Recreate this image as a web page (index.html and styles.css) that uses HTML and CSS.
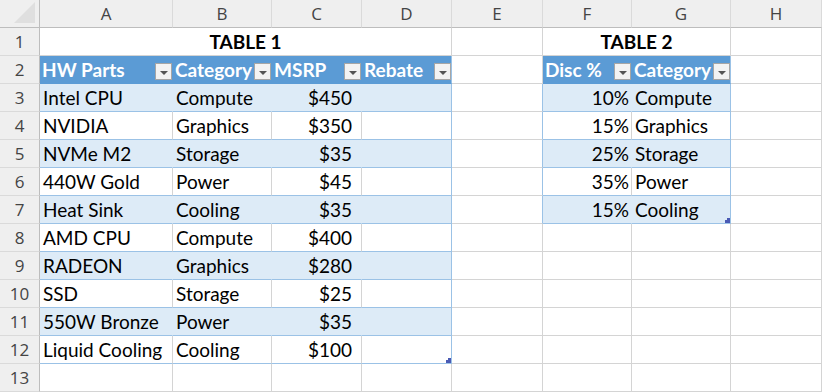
FILE: index.html
```html
<!DOCTYPE html>
<html>
<head>
<meta charset="utf-8">
<link rel="stylesheet" href="styles.css">
</head>
<body>
<div class="sheet">
  <!-- column headings -->
  <div class="corner"><span class="tri"></span></div>
  <div class="ch">A</div><div class="ch">B</div><div class="ch">C</div><div class="ch">D</div>
  <div class="ch">E</div><div class="ch">F</div><div class="ch">G</div><div class="ch">H</div>

  <!-- row 1 -->
  <div class="rh">1</div>
  <div class="c title span4">TABLE 1</div>
  <div class="c"></div>
  <div class="c title span2">TABLE 2</div>
  <div class="c"></div>

  <!-- row 2 -->
  <div class="rh">2</div>
  <div class="c th"><span>HW Parts</span><span class="fb"></span></div>
  <div class="c th"><span>Category</span><span class="fb"></span></div>
  <div class="c th"><span>MSRP</span><span class="fb"></span></div>
  <div class="c th last"><span>Rebate</span><span class="fb"></span></div>
  <div class="c"></div>
  <div class="c th"><span>Disc %</span><span class="fb"></span></div>
  <div class="c th last"><span>Category</span><span class="fb"></span></div>
  <div class="c"></div>

  <!-- row 3 -->
  <div class="rh">3</div>
  <div class="c t b">Intel CPU</div><div class="c t b">Compute</div><div class="c t b num">$450</div><div class="c t b last"></div>
  <div class="c lb"></div>
  <div class="c t b pct">10%</div><div class="c t b last">Compute</div>
  <div class="c"></div>

  <!-- row 4 -->
  <div class="rh">4</div>
  <div class="c t">NVIDIA</div><div class="c t">Graphics</div><div class="c t num">$350</div><div class="c t last"></div>
  <div class="c lb"></div>
  <div class="c t pct">15%</div><div class="c t last">Graphics</div>
  <div class="c"></div>

  <!-- row 5 -->
  <div class="rh">5</div>
  <div class="c t b">NVMe M2</div><div class="c t b">Storage</div><div class="c t b num">$35</div><div class="c t b last"></div>
  <div class="c lb"></div>
  <div class="c t b pct">25%</div><div class="c t b last">Storage</div>
  <div class="c"></div>

  <!-- row 6 -->
  <div class="rh">6</div>
  <div class="c t">440W Gold</div><div class="c t">Power</div><div class="c t num">$45</div><div class="c t last"></div>
  <div class="c lb"></div>
  <div class="c t pct">35%</div><div class="c t last">Power</div>
  <div class="c"></div>

  <!-- row 7 -->
  <div class="rh">7</div>
  <div class="c t b">Heat Sink</div><div class="c t b">Cooling</div><div class="c t b num">$35</div><div class="c t b last"></div>
  <div class="c lb"></div>
  <div class="c t b pct">15%</div><div class="c t b last end">Cooling<span class="grip"></span></div>
  <div class="c"></div>

  <!-- row 8 -->
  <div class="rh">8</div>
  <div class="c t">AMD CPU</div><div class="c t">Compute</div><div class="c t num">$400</div><div class="c t last"></div>
  <div class="c"></div><div class="c"></div><div class="c"></div><div class="c"></div>

  <!-- row 9 -->
  <div class="rh">9</div>
  <div class="c t b">RADEON</div><div class="c t b">Graphics</div><div class="c t b num">$280</div><div class="c t b last"></div>
  <div class="c"></div><div class="c"></div><div class="c"></div><div class="c"></div>

  <!-- row 10 -->
  <div class="rh">10</div>
  <div class="c t">SSD</div><div class="c t">Storage</div><div class="c t num">$25</div><div class="c t last"></div>
  <div class="c"></div><div class="c"></div><div class="c"></div><div class="c"></div>

  <!-- row 11 -->
  <div class="rh">11</div>
  <div class="c t b">550W Bronze</div><div class="c t b">Power</div><div class="c t b num">$35</div><div class="c t b last"></div>
  <div class="c"></div><div class="c"></div><div class="c"></div><div class="c"></div>

  <!-- row 12 -->
  <div class="rh">12</div>
  <div class="c t">Liquid Cooling</div><div class="c t">Cooling</div><div class="c t num">$100</div><div class="c t last end"><span class="grip"></span></div>
  <div class="c"></div><div class="c"></div><div class="c"></div><div class="c"></div>

  <!-- row 13 -->
  <div class="rh">13</div>
  <div class="c"></div><div class="c"></div><div class="c"></div><div class="c"></div>
  <div class="c"></div><div class="c"></div><div class="c"></div><div class="c"></div>
</div>
</body>
</html>
```

FILE: styles.css
```css
* { box-sizing: border-box; }
html, body { margin: 0; padding: 0; background: #fff; }

.sheet {
  display: grid;
  grid-template-columns: 40px 133px 99px 90px 90px 91px 89px 99px 91px;
  grid-auto-rows: 28px;
  width: 822px;
  height: 392px;
  overflow: hidden;
  font-family: Lato, "Liberation Sans", sans-serif;
  font-size: 19px;
  color: #000;
}

.corner {
  background: #efefef;
  border-right: 1px solid #bdbdbd;
  border-bottom: 1px solid #bdbdbd;
  position: relative;
}
.corner .tri {
  position: absolute;
  right: 4px;
  bottom: 4px;
  width: 0;
  height: 0;
  border-left: 21px solid transparent;
  border-bottom: 21px solid #dfdfdf;
}

.ch {
  background: #efefef;
  border-right: 1px solid #dadada;
  border-bottom: 1px solid #bdbdbd;
  color: #444;
  font-family: "Open Sans", "Noto Sans", sans-serif;
  font-size: 17px;
  display: flex;
  align-items: center;
  justify-content: center;
}

.rh {
  background: #efefef;
  border-right: 1px solid #bdbdbd;
  border-bottom: 1px solid #dadada;
  color: #444;
  font-family: "Open Sans", "Noto Sans", sans-serif;
  font-size: 17px;
  display: flex;
  align-items: center;
  justify-content: center;
}

.c {
  border-right: 1px solid #d4d4d4;
  border-bottom: 1px solid #d4d4d4;
  background: #fff;
  display: flex;
  align-items: center;
  padding: 0 3px;
  white-space: nowrap;
  overflow: visible;
  position: relative;
}

.span4 { grid-column: span 4; }
.span2 { grid-column: span 2; }
.title {
  justify-content: center;
  font-weight: 700;
}

.th {
  background: #5b9bd5;
  border-right-color: #5b9bd5;
  border-bottom-color: #5b9bd5;
  color: #fff;
  font-weight: 700;
  padding-right: 0;
  padding-left: 2px;
  justify-content: space-between;
}
.fb {
  width: 17px;
  height: 17px;
  margin-right: 0;
  margin-top: 3px;
  background: #f3f3f3;
  border: 1px solid #a6a6a6;
  position: relative;
  flex: none;
}
.fb::after {
  content: "";
  position: absolute;
  left: 4px;
  top: 7px;
  width: 0;
  height: 0;
  border-left: 4px solid transparent;
  border-right: 4px solid transparent;
  border-top: 4px solid #555;
}

.t { border-bottom-color: #9bc2e6; }
.b { background: #ddebf7; border-right-color: #ddebf7; }
.last { border-right-color: #9bc2e6; }
.lb { border-right-color: #9bc2e6; }

.num { justify-content: flex-end; padding-right: 9px; }
.pct { justify-content: flex-end; padding-right: 2px; }

.grip {
  position: absolute;
  right: 0;
  bottom: 0;
  width: 5px;
  height: 5px;
  background: #4a5ab4;
  clip-path: polygon(100% 0, 100% 100%, 0 100%, 0 40%, 40% 40%, 40% 0);
}
```
